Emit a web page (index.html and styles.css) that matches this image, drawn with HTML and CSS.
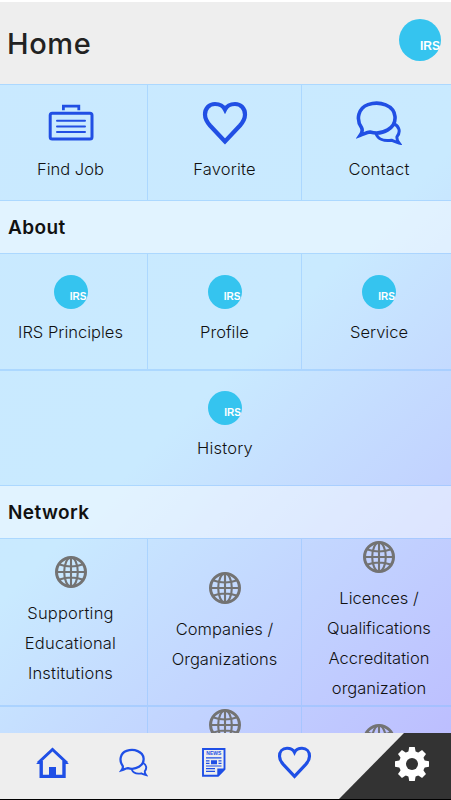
FILE: index.html
```
<!DOCTYPE html>
<html lang="en">
  <head>
    <meta charset="utf-8">
    <title>Home</title>
    <meta name="viewport" content="width=device-width, initial-scale=1" />
    <link rel="stylesheet" href="styles.css">
  </head>
  <body>
    <!-- shared icons -->
    <svg class="symbols">
      <symbol id="heart" viewBox="0 0 46 44">
        <path d="M23 40.5L8 24.5C4.5 20.5 3 17.5 3 13.5C3 7.5 7 3 13 3C18 3 21 4.5 23 8.5C25 4.5 28 3 33 3C39 3 43 7.5 43 13.5C43 17.5 41.5 20.5 38 24.5Z" fill="none" stroke="currentColor" stroke-width="4.2"/>
      </symbol>
      <symbol id="chat" viewBox="0 0 46 44">
        <g fill="none" stroke="currentColor">
          <path stroke-width="3.6" d="M4.2 34.3C6.5 31 6.5 28.5 5.6 26.8C-.5 18 2.5 7 12 3.6C24-.5 38 4.5 39 15.5C40 27 27 34.5 14 31C11 31.3 8 33 4.2 34.3Z"/>
          <path stroke-width="3" d="M38.2 22.8C43.5 25.5 44.8 31 41 35.6C40.6 38 41.5 40 43 42C40 41.3 37.5 40 35.5 39.2C28 40.5 22 38 20 32.7"/>
        </g>
      </symbol>
      <symbol id="globe" viewBox="0 0 32 32">
        <g fill="none" stroke="currentColor" stroke-width="2.1">
          <circle cx="16" cy="16" r="14.5" stroke-width="3"/>
          <ellipse cx="16" cy="16" rx="6.8" ry="14.5"/>
          <path d="M16 1V31M1 16H31M4.5 8.5Q16 12.5 27.5 8.5M4.5 23.5Q16 19.5 27.5 23.5"/>
        </g>
      </symbol>
    </svg>

    <div class="header">
      <h1>Home</h1>
      <div class="logo logo-big"><span>IRS</span></div>
    </div>

    <div class="content">
      <div class="grid row-menu">
        <div class="tile">
          <svg class="icon-big" viewBox="0 0 46 44">
            <g fill="none" stroke="currentColor">
              <rect x="2.2" y="12.2" width="41.8" height="25.7" rx="2" stroke-width="3"/>
              <path stroke-width="2.8" d="M15.4 9.2V5.2H30.8V9.2"/>
              <path stroke-width="2" stroke-linecap="round" d="M9 19.8H37M9 25.4H37M9 31H37"/>
            </g>
          </svg>
          <p>Find Job</p>
        </div>
        <div class="tile">
          <svg class="icon-big"><use href="#heart"/></svg>
          <p class="spaced">Favorite</p>
        </div>
        <div class="tile">
          <svg class="icon-big"><use href="#chat"/></svg>
          <p class="spaced">Contact</p>
        </div>
      </div>

      <h2>About</h2>
      <div class="grid row-about">
        <div class="tile">
          <div class="logo"><span>IRS</span></div>
          <p>IRS Principles</p>
        </div>
        <div class="tile">
          <div class="logo"><span>IRS</span></div>
          <p>Profile</p>
        </div>
        <div class="tile">
          <div class="logo"><span>IRS</span></div>
          <p>Service</p>
        </div>
      </div>
      <div class="grid row-history">
        <div class="tile wide">
          <div class="logo"><span>IRS</span></div>
          <p class="spaced">History</p>
        </div>
      </div>

      <h2>Network</h2>
      <div class="grid row-network">
        <div class="tile">
          <svg class="globe"><use href="#globe"/></svg>
          <p class="spaced">Supporting<br>Educational<br>Institutions</p>
        </div>
        <div class="tile">
          <svg class="globe"><use href="#globe"/></svg>
          <p>Companies /<br>Organizations</p>
        </div>
        <div class="tile">
          <svg class="globe"><use href="#globe"/></svg>
          <p>Licences /<br>Qualifications<br>Accreditation<br>organization</p>
        </div>
      </div>
      <div class="grid row-more">
        <div class="tile"></div>
        <div class="tile"><svg class="globe"><use href="#globe"/></svg></div>
        <div class="tile lower"><svg class="globe"><use href="#globe"/></svg></div>
      </div>
    </div>

    <div class="nav">
      <div class="nav-item">
        <svg width="34" height="32" viewBox="0 0 34 32">
          <path fill="none" stroke="currentColor" stroke-width="3" d="M2 16L16.5 2.5L31 16"/>
          <path fill="none" stroke="currentColor" stroke-width="3.4" d="M5.2 14V29.4H28V14"/>
          <path fill="currentColor" d="M0 17L5 13V17ZM33 17L28 13V17ZM13 20H20V30H13Z"/>
        </svg>
      </div>
      <div class="nav-item">
        <svg width="29" height="29"><use href="#chat"/></svg>
      </div>
      <div class="nav-item news-item">
        <svg width="24" height="29" viewBox="0 0 24 29">
          <path fill="none" stroke="currentColor" stroke-width="1.9" d="M1 1H22.5V21L16 27.8H1Z"/>
          <path fill="currentColor" d="M15.3 28V20.5H23V21.5L16.5 28ZM9 12.2H15V16.2H9Z"/>
          <path stroke="currentColor" stroke-width="1.2" d="M4 9.8H19.5M4 12.8H7.5M4 15.4H7.5M16.5 12.8H19.5M16.5 15.4H19.5M4 18H19.5M4 20.7H13M4 23.3H13"/>
          <text class="news" x="11.8" y="7.4" text-anchor="middle">NEWS</text>
        </svg>
      </div>
      <div class="nav-item">
        <svg width="35" height="33" viewBox="0 0 46 44"><use href="#heart"/></svg>
      </div>
      <div class="settings">
        <svg width="34" height="34" viewBox="-17 -17 34 34">
          <g fill="#fff">
            <path id="tooth" d="M-4-10L-2.8-17H2.8L4-10V10L2.8 17H-2.8L-4 10Z"/>
            <use href="#tooth" transform="rotate(45)"/>
            <use href="#tooth" transform="rotate(90)"/>
            <use href="#tooth" transform="rotate(135)"/>
            <circle r="13"/>
          </g>
          <circle r="6" fill="#333"/>
        </svg>
      </div>
    </div>
  </body>
</html>
```
FILE: styles.css
```
* {
  box-sizing: border-box;
}
body {
  margin: 0;
  height: 800px;
  overflow: hidden;
  display: flex;
  flex-direction: column;
  font-family: Inter, "Liberation Sans", sans-serif;
  color: #111;
  background: linear-gradient(135deg, #c9e9ff 0%, #c9eaff 48%, #c2d3ff 73%, #bcbcff 97%);
}
h1, h2, p {
  margin: 0;
}
.symbols {
  position: absolute;
  width: 0;
  height: 0;
}
.header {
  flex: none;
  height: 84px;
  border-top: 2px solid #fff;
  padding: 0 10px 0 7px;
  display: flex;
  align-items: center;
  justify-content: space-between;
  background-color: #eee;
}
h1 {
  font-size: 29px;
  font-weight: 500;
  letter-spacing: 0.6px;
  color: #222;
}
.logo {
  flex: none;
  width: 34px;
  height: 34px;
  border-radius: 50%;
  background-color: #35c4ef;
  color: #fff;
  font: bold 10px/10px "Liberation Sans", sans-serif;
  padding: 17px 1px 0 0;
  text-align: right;
}
.logo-big {
  width: 42px;
  height: 42px;
  margin-bottom: 7px;
  font-size: 12px;
  line-height: 12px;
  padding-top: 21px;
}
.content {
  flex: 1;
  min-height: 0;
  overflow: hidden;
}
h2 {
  height: 52px;
  padding-left: 8px;
  font-size: 19px;
  font-weight: 600;
  line-height: 54px;
  letter-spacing: 0.4px;
  background-color: rgba(255, 255, 255, 0.45);
}
.grid {
  display: grid;
  grid-template-columns: 154px 154px 155px;
  margin-left: -6px;
  border-top: 1px solid rgba(130, 190, 255, 0.4);
  border-bottom: 1px solid rgba(130, 190, 255, 0.4);
}
.tile {
  display: flex;
  flex-direction: column;
  align-items: center;
  justify-content: center;
  border-right: 1px solid rgba(130, 190, 255, 0.4);
}
.tile p {
  font-size: 16.5px;
  font-weight: 300;
  line-height: 30px;
  text-align: center;
}
.tile .spaced {
  letter-spacing: 0.2px;
}
.wide {
  grid-column: 1 / 4;
}
.icon-big {
  width: 46px;
  height: 44px;
  margin-bottom: 9px;
  color: #214fe4;
}
.tile .logo {
  margin-bottom: 8px;
}
.row-about .tile, .row-history .tile {
  padding-bottom: 2px;
}
.globe {
  flex: none;
  width: 32px;
  height: 32px;
  margin-bottom: 10px;
  color: #737373;
}
.row-menu {
  height: 117px;
}
.row-about {
  height: 117px;
}
.row-history {
  height: 116px;
}
.row-network {
  height: 168px;
}
.row-network .tile:nth-child(2) {
  padding-top: 1px;
}
.row-more {
  height: 70px;
}
.row-more .tile {
  justify-content: flex-start;
  padding-top: 2px;
}
.row-more .lower {
  padding-top: 17px;
}
.nav {
  flex: none;
  height: 67px;
  border-bottom: 1px solid #000;
  display: grid;
  grid-template-columns: 93px 80px 80px 82px 116px;
  background-color: #eee;
  color: #1f4fe6;
}
.nav-item {
  display: flex;
  align-items: center;
  justify-content: center;
  padding-bottom: 7px;
}
.nav-item:first-child {
  padding-left: 12px;
}
.news-item {
  padding-left: 2px;
}
.news {
  font: bold 5px "Liberation Sans", sans-serif;
  fill: #1f4fe6;
}
.settings {
  display: flex;
  align-items: center;
  justify-content: center;
  padding: 0 0 4px 38px;
  background-color: #333;
  clip-path: polygon(69px 0, 100% 0, 100% 100%, 4px 100%);
}
```
